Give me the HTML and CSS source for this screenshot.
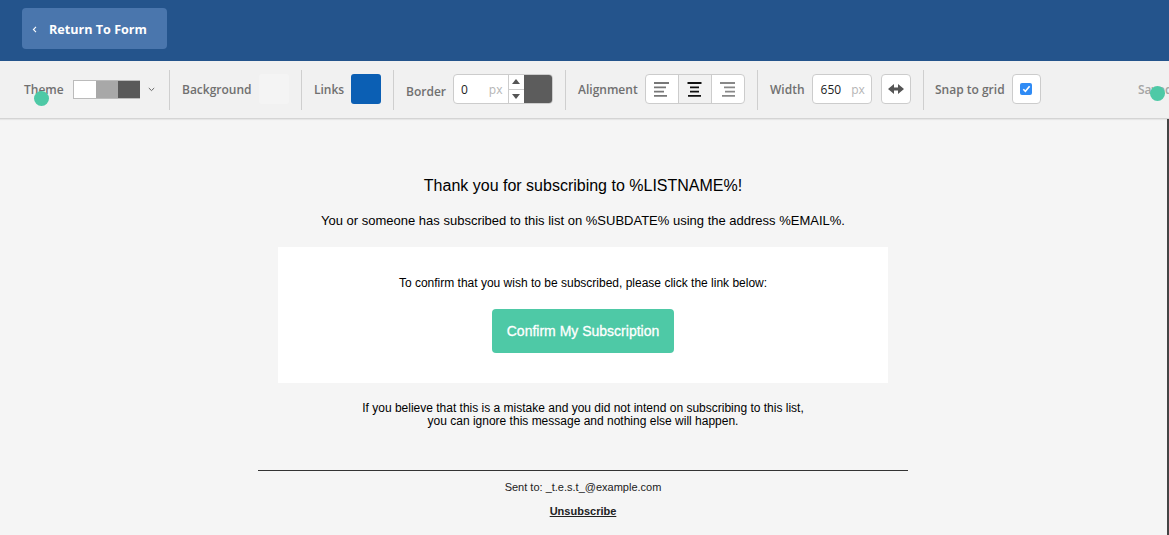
FILE: index.html
```html
<!DOCTYPE html>
<html lang="en">
<head>
<meta charset="utf-8">
<title>Confirmation Page</title>
<link rel="stylesheet" href="styles.css">
</head>
<body>
<header class="topbar">
  <a class="return-btn"><svg class="chev-left" width="5" height="7" viewBox="0 0 5 7"><path d="M4 .8 1.4 3.5 4 6.2" fill="none" stroke="#fff" stroke-width="1.1"/></svg><span>Return To Form</span></a>
</header>
<div class="toolbar">
  <div class="group g-theme">
    <span class="label">Theme</span>
    <div class="theme-swatch"><i class="t1"></i><i class="t2"></i><i class="t3"></i></div>
    <svg class="chev-down" width="7" height="5" viewBox="0 0 7 5"><path d="M.8 1 3.5 3.6 6.2 1" fill="none" stroke="#666" stroke-width="1"/></svg>
  </div>
  <div class="group g-bg">
    <span class="label">Background</span>
    <div class="color bg-color"></div>
  </div>
  <div class="group g-links">
    <span class="label">Links</span>
    <div class="color link-color"></div>
  </div>
  <div class="group g-border">
    <span class="label label-low">Border</span>
    <div class="field border-field">
      <span class="val">0</span><span class="unit">px</span>
      <div class="stepper">
        <div class="step"><svg width="8" height="5" viewBox="0 0 8 5"><path d="M4 0 8 5H0z" fill="#555"/></svg></div>
        <div class="step"><svg width="8" height="5" viewBox="0 0 8 5"><path d="M0 0H8L4 5z" fill="#555"/></svg></div>
      </div>
      <div class="border-color"></div>
    </div>
  </div>
  <div class="group g-align">
    <span class="label">Alignment</span>
    <div class="seg">
      <div class="seg-btn"><svg width="15" height="15" viewBox="0 0 15 15"><path d="M0 1h15M0 5.300h12M0 9.600h10M0 13.900h13" stroke="#777" stroke-width="1.800"/></svg></div>
      <div class="seg-btn active"><svg width="15" height="15" viewBox="0 0 15 15"><path d="M.5 1h14M3 5.300h9M3 9.600h9M1 13.900h13" stroke="#111" stroke-width="1.800"/></svg></div>
      <div class="seg-btn"><svg width="15" height="15" viewBox="0 0 15 15"><path d="M0 1h15M4 5.300h11M5 9.600h10M2 13.900h13" stroke="#888" stroke-width="1.800"/></svg></div>
    </div>
  </div>
  <div class="group g-width">
    <span class="label">Width</span>
    <div class="field width-field"><span class="val">650</span><span class="unit">px</span></div>
    <div class="icon-btn"><svg width="16" height="10" viewBox="0 0 16 10"><path d="M0 5 6 0V3.500H10V0L16 5 10 10V6.500H6V10z" fill="#555"/></svg></div>
  </div>
  <div class="group g-snap">
    <span class="label">Snap to grid</span>
    <div class="icon-btn check-btn"><span class="check"><svg width="9" height="8" viewBox="0 0 9 8"><path d="M1.300 4.200 3.400 6.300 7.600 1.200" fill="none" stroke="#fff" stroke-width="1.600"/></svg></span></div>
  </div>
  <span class="saved">Saved</span>
</div>
<main class="canvas">
  <div class="email">
    <h1 class="title">Thank you for subscribing to %LISTNAME%!</h1>
    <p class="intro">You or someone has subscribed to this list on %SUBDATE% using the address %EMAIL%.</p>
    <section class="card">
      <p class="card-text">To confirm that you wish to be subscribed, please click the link below:</p>
      <a class="confirm">Confirm My Subscription</a>
    </section>
    <p class="note">If you believe that this is a mistake and you did not intend on subscribing to this list,<br>you can ignore this message and nothing else will happen.</p>
    <footer class="foot">
      <p class="sent">Sent to: _t.e.s.t_@example.com</p>
      <a class="unsub">Unsubscribe</a>
    </footer>
  </div>
</main>
<div class="edge"></div>
<div class="dot dot-a"></div>
<div class="dot dot-b"></div>
</body>
</html>
```
FILE: styles.css
```css
* { box-sizing: border-box; }
html, body { margin: 0; height: 100%; }
body {
  height: 535px;
  overflow: hidden;
  background: #f5f5f5;
  font-family: "Liberation Sans", Arial, sans-serif;
  color: #000;
  position: relative;
}
.topbar {
  height: 61px;
  background: #24548c;
  padding: 8px 22px;
}
.return-btn {
  display: flex;
  align-items: center;
  width: 145px;
  height: 41px;
  background: #4a76ad;
  border-radius: 4px;
  padding: 1px 0 0 10px;
  color: #fff;
  font: 700 12.600px "Open Sans", sans-serif;
}
.chev-left { margin-right: 12px; }
.toolbar {
  height: 58px;
  background: #f1f1f1;
  border-bottom: 1px solid #d4d4d4;
  box-shadow: 0 1px 1px rgba(0, 0, 0, .06);
  display: flex;
  align-items: flex-start;
  padding-top: 9px;
  position: relative;
  font: 600 12px "Open Sans", sans-serif;
  color: #707070;
}
.group {
  height: 40px;
  display: flex;
  align-items: center;
  border-right: 1px solid #cfcfcf;
  flex: none;
}
.label { position: relative; top: -1px; white-space: nowrap; }
.label-low { top: 1px; }
.g-theme { width: 170px; padding-left: 24px; }
.theme-swatch {
  display: flex;
  width: 67px;
  height: 19px;
  margin-left: 9px;
  border: 1px solid #bbb;
  border-right: 0;
  position: relative;
  top: -1px;
}
.theme-swatch i { flex: 1; display: block; }
.t1 { background: #fff; }
.t2 { background: #a8a8a8; }
.t3 { background: #595959; }
.chev-down { margin-left: 8px; position: relative; top: -1px; }
.g-bg { width: 132px; padding-left: 12px; }
.color { width: 30px; height: 30px; border-radius: 3px; margin-left: 7px; position: relative; top: -1px; }
.bg-color { background: #f4f4f4; }
.link-color { background: #0b5fb4; }
.g-links { width: 92px; padding-left: 12px; }
.g-border { width: 172px; padding-left: 12px; }
.field {
  display: flex;
  align-items: center;
  height: 30px;
  background: #fff;
  border: 1px solid #ccc;
  border-radius: 4px;
  font-weight: 400;
  font-size: 12px;
  color: #222;
  position: relative;
  top: -1px;
}
.border-field { width: 100px; margin-left: 7px; overflow: hidden; }
.val { margin-left: 7px; }
.unit { color: #b5b5b5; }
.border-field .unit { margin-left: 21px; width: 19px; }
.stepper {
  width: 16px;
  height: 100%;
  border-left: 1px solid #ccc;
  display: flex;
  flex-direction: column;
}
.step { flex: 1; display: flex; align-items: center; justify-content: center; }
.step + .step { border-top: 1px solid #ccc; }
.border-color { flex: 1; height: 100%; background: #5c5c5c; }
.g-align { width: 192px; padding-left: 12px; }
.seg {
  display: flex;
  width: 100px;
  height: 30px;
  margin-left: 7px;
  background: #fff;
  border: 1px solid #ccc;
  border-radius: 4px;
  overflow: hidden;
  position: relative;
  top: -1px;
}
.seg-btn { flex: 1; display: flex; align-items: center; justify-content: center; }
.seg-btn + .seg-btn { border-left: 1px solid #ccc; }
.active { background: #f2f2f2; }
.g-width { width: 166px; padding-left: 12px; }
.width-field { width: 60px; margin-left: 7px; }
.width-field .val { margin-left: 8px; }
.width-field .unit { margin-left: 10px; }
.icon-btn {
  width: 30px;
  height: 30px;
  margin-left: 9px;
  background: #fff;
  border: 1px solid #ccc;
  border-radius: 4px;
  display: flex;
  align-items: center;
  justify-content: center;
  position: relative;
  top: -1px;
}
.g-snap { border-right: 0; padding-left: 11px; width: 190px; }
.check-btn { margin-left: 7px; width: 29px; }
.check {
  width: 12px;
  height: 12px;
  border-radius: 2px;
  background: #2f8bf5;
  display: flex;
  align-items: center;
  justify-content: center;
}
.saved {
  position: absolute;
  left: 1138px;
  top: 20px;
  color: #a5a5a5;
  white-space: nowrap;
}
.canvas { display: flex; justify-content: center; padding-right: 3px; }
.email { width: 650px; text-align: center; padding-top: 58px; }
.title { margin: 0; font-size: 16px; font-weight: 400; line-height: 18px; }
.intro { margin: 18px 0 0; font-size: 13px; line-height: 16px; }
.card {
  width: 610px;
  height: 136px;
  margin: 18px auto 0;
  background: #fff;
  padding-top: 29px;
}
.card-text { margin: 0; font-size: 12px; line-height: 14px; }
.confirm {
  display: inline-block;
  width: 182px;
  height: 44px;
  margin-top: 19px;
  background: #4ec9a6;
  border-radius: 4px;
  color: #fff;
  font-size: 14px;
  font-weight: 400;
  -webkit-text-stroke: .3px #fff;
  line-height: 44px;
}
.note { margin: 19px 0 0; font-size: 12px; line-height: 13px; }
.foot { margin-top: 42px; border-top: 1px solid #333; padding-top: 10px; font-size: 11px; color: #222; }
.sent { margin: 0 0 11px; line-height: 13px; }
.unsub { font-weight: 700; text-decoration: underline; line-height: 13px; display: block; }
.edge { position: absolute; right: 0; top: 119px; bottom: 0; width: 2px; background: #444; }
.dot { position: absolute; width: 15px; height: 15px; border-radius: 50%; background: #4ec9a6; }
.dot-a { left: 34px; top: 91px; }
.dot-b { left: 1150px; top: 86px; }
```
